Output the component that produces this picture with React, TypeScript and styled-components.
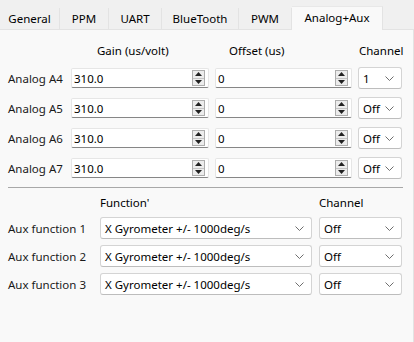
import React from 'react';
import styled, { createGlobalStyle } from 'styled-components';

const GlobalStyle = createGlobalStyle`
    html, body {
        margin: 0;
        padding: 0;
        background: #f0f0f0;
    }
    body {
        font-family: "Noto Sans", "Open Sans", sans-serif;
        font-size: 11.5px;
        color: #000;
    }
`;

const tabs = [
    { name: 'General', width: 60 },
    { name: 'PPM', width: 49 },
    { name: 'UART', width: 53 },
    { name: 'BlueTooth', width: 77 },
    { name: 'PWM', width: 53 },
    { name: 'Analog+Aux', width: 91, active: true },
];

const analogRows = [
    { label: 'Analog A4', channel: '1' },
    { label: 'Analog A5', channel: 'Off' },
    { label: 'Analog A6', channel: 'Off' },
    { label: 'Analog A7', channel: 'Off' },
];

const auxRows = ['Aux function 1', 'Aux function 2', 'Aux function 3'];

function Chevron() {
    return (
        <svg width="9" height="5" viewBox="0 0 9 5">
            <path d="M0.5 0.5 L4.5 4.5 L8.5 0.5" fill="none" stroke="#6e6e6e" strokeWidth="1" />
        </svg>
    );
}

function SpinBox({ value }: { value: string }) {
    return (
        <Spin>
            <SpinText>{value}</SpinText>
            <SpinButtons>
                <SpinHalf>
                    <svg width="7" height="4" viewBox="0 0 7 4"><path d="M3.5 0 L7 4 L0 4 Z" fill="#222" /></svg>
                </SpinHalf>
                <SpinHalf $bottom>
                    <svg width="7" height="4" viewBox="0 0 7 4"><path d="M0 0 L7 0 L3.5 4 Z" fill="#222" /></svg>
                </SpinHalf>
            </SpinButtons>
        </Spin>
    );
}

function Combo({ value }: { value: string }) {
    return (
        <ComboBox>
            <span>{value}</span>
            <Chevron />
        </ComboBox>
    );
}

export default function App() {
    return (
        <Window>
            <GlobalStyle />
            <TabBar>
                {tabs.map((t) => (
                    <Tab key={t.name} $active={!!t.active} style={{ width: t.width }}>
                        {t.name}
                    </Tab>
                ))}
            </TabBar>
            <Panel>
                <AnalogGrid>
                    <span />
                    <Header $indent={26}>Gain (us/volt)</Header>
                    <Header $indent={14}>Offset (us)</Header>
                    <Header $indent={1}>Channel</Header>
                    {analogRows.map((r) => (
                        <React.Fragment key={r.label}>
                            <RowLabel>{r.label}</RowLabel>
                            <SpinBox value="310.0" />
                            <SpinBox value="0" />
                            <Combo value={r.channel} />
                        </React.Fragment>
                    ))}
                </AnalogGrid>
                <Divider />
                <AuxGrid>
                    <span />
                    <Header $indent={0}>Function'</Header>
                    <Header $indent={0}>Channel</Header>
                    {auxRows.map((label) => (
                        <React.Fragment key={label}>
                            <RowLabel>{label}</RowLabel>
                            <Combo value="X Gyrometer +/- 1000deg/s" />
                            <Combo value="Off" />
                        </React.Fragment>
                    ))}
                </AuxGrid>
            </Panel>
        </Window>
    );
}

const Window = styled.div`
    width: 414px;
    height: 342px;
    display: flex;
    flex-direction: column;
    overflow: hidden;
`;

const TabBar = styled.div`
    height: 29px;
    display: flex;
    align-items: flex-end;
    border-bottom: 1px solid #e3e3e3;
    box-sizing: content-box;
`;

const Tab = styled.div<{ $active: boolean }>`
    box-sizing: border-box;
    height: ${(p) => (p.$active ? '24px' : '21px')};
    margin-bottom: ${(p) => (p.$active ? '-1px' : '0')};
    display: flex;
    align-items: center;
    justify-content: center;
    padding-bottom: ${(p) => (p.$active ? '3px' : '0')};
    background: ${(p) => (p.$active ? '#f9f9f9' : '#f0f0f0')};
    border-right: 1px solid #e3e3e3;
    border-top: ${(p) => (p.$active ? '1px solid #e8e8e8' : 'none')};
    color: #000;
    white-space: nowrap;
`;

const Panel = styled.div`
    flex: 1;
    background: #f9f9f9;
    border-right: 1px solid #e3e3e3;
`;

const AnalogGrid = styled.div`
    display: grid;
    grid-template-columns: 57px 138px 137px 44px;
    grid-template-rows: 16px repeat(4, 22px);
    column-gap: 6px;
    row-gap: 8px;
    padding: 13px 0 0 8px;
    align-items: center;
`;

const AuxGrid = styled.div`
    display: grid;
    grid-template-columns: 85px 212px 83px;
    grid-template-rows: 16px repeat(3, 22px);
    column-gap: 7px;
    row-gap: 6px;
    padding: 7px 0 0 8px;
    align-items: center;
`;

const Header = styled.div<{ $indent: number }>`
    padding-left: ${(p) => p.$indent}px;
    line-height: 16px;
    white-space: nowrap;
`;

const RowLabel = styled.div`
    white-space: nowrap;
    color: #1a1a1a;
`;

const Spin = styled.div`
    box-sizing: border-box;
    height: 20px;
    display: flex;
    align-items: center;
    background: #fff;
    border: 1px solid #e6e6e6;
    border-bottom: 1px solid #868686;
    border-radius: 2px;
    padding: 0 3px 0 2px;
`;

const SpinText = styled.span`
    flex: 1;
    white-space: nowrap;
`;

const SpinButtons = styled.div`
    width: 13px;
    height: 16px;
    display: flex;
    flex-direction: column;
    box-sizing: border-box;
    border: 1px solid #adadad;
    background: #ececec;
`;

const SpinHalf = styled.div<{ $bottom?: boolean }>`
    flex: 1;
    display: flex;
    align-items: center;
    justify-content: center;
    border-top: ${(p) => (p.$bottom ? '1px solid #c4c4c4' : 'none')};
`;

const ComboBox = styled.div`
    box-sizing: border-box;
    height: 22px;
    display: flex;
    align-items: center;
    justify-content: space-between;
    background: #fff;
    border: 1px solid #d4d4d4;
    border-bottom-color: #bdbdbd;
    border-radius: 3px;
    padding: 0 7px 0 4px;
    white-space: nowrap;
    overflow: hidden;
`;

const Divider = styled.div`
    height: 1px;
    background: #a8a8a8;
    margin: 8px 10px 0 8px;
`;
